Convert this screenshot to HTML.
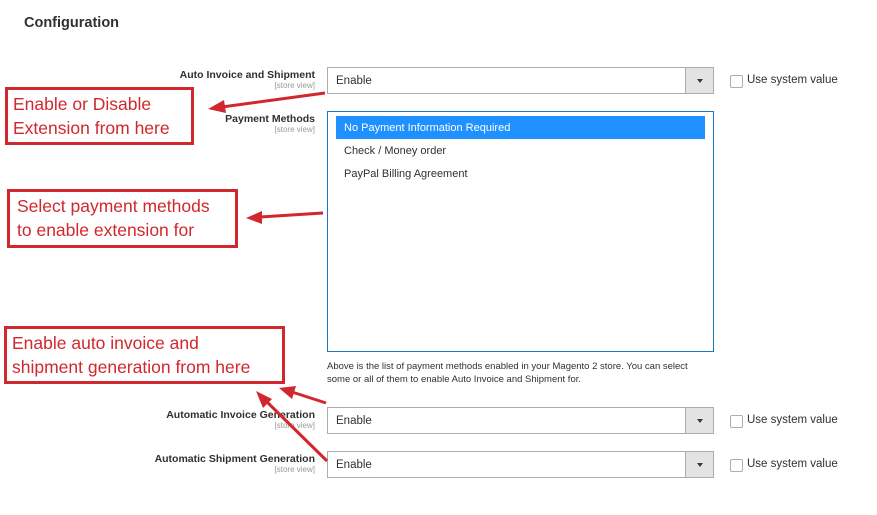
<!DOCTYPE html>
<html><head><meta charset="utf-8"><style>
*{margin:0;padding:0;box-sizing:border-box}
body{width:877px;height:515px;background:#fff;font-family:"Liberation Sans",sans-serif;position:relative;overflow:hidden;color:#303030}
.a{position:absolute}
.lbl{position:absolute;right:562px;text-align:right;font-size:10.5px;font-weight:bold;color:#303030;white-space:nowrap;line-height:13px}
.lbl small{display:block;font-size:8px;font-weight:normal;color:#999;line-height:8px}
.sel{position:absolute;left:327px;width:387px;height:27px;border:1px solid #adadad;font-size:11.5px;padding:7px 8px}
.sel .btn{position:absolute;right:0;top:0;width:28px;height:25px;background:#e3e3e3;border-left:1px solid #adadad}
.sel .btn:after{content:"";position:absolute;left:11px;top:11px;border:3.5px solid transparent;border-top:4px solid #41362f}
.cb{position:absolute;left:730px;width:13px;height:13px;border:1px solid #adadad;border-radius:2px}
.cbl{position:absolute;left:747px;font-size:11.5px;color:#303030}
.box{position:absolute;border:3px solid #d0282e;color:#d0282e;font-size:17.5px;line-height:24px;padding:2px 5px;white-space:nowrap}
.opt{position:absolute;left:336px;width:369px;height:23px;font-size:11px;padding:6px 8px 0}
</style></head><body>
<div class="a" style="left:24px;top:15px;font-size:14.5px;font-weight:bold;color:#303030">Configuration</div>

<div class="lbl" style="top:69px">Auto Invoice and Shipment<small>[store view]</small></div>
<div class="sel" style="top:67px">Enable<div class="btn"></div></div>
<div class="cb" style="top:75px"></div><div class="cbl" style="top:74px">Use system value</div>

<div class="lbl" style="top:113px">Payment Methods<small>[store view]</small></div>
<div class="a" style="left:327px;top:111px;width:387px;height:241px;border:1px solid #1979c3"></div>
<div class="opt" style="top:116px;background:#1e90ff;color:#fff">No Payment Information Required</div>
<div class="opt" style="top:139px">Check / Money order</div>
<div class="opt" style="top:162px">PayPal Billing Agreement</div>
<div class="a" style="left:327px;top:360px;width:385px;font-size:9.5px;line-height:13px">Above is the list of payment methods enabled in your Magento 2 store. You can select some or all of them to enable Auto Invoice and Shipment for.</div>

<div class="lbl" style="top:409px">Automatic Invoice Generation<small>[store view]</small></div>
<div class="sel" style="top:407px">Enable<div class="btn"></div></div>
<div class="cb" style="top:415px"></div><div class="cbl" style="top:414px">Use system value</div>

<div class="lbl" style="top:453px">Automatic Shipment Generation<small>[store view]</small></div>
<div class="sel" style="top:451px">Enable<div class="btn"></div></div>
<div class="cb" style="top:459px"></div><div class="cbl" style="top:458px">Use system value</div>

<div class="box" style="left:5px;top:87px;width:189px;height:58px">Enable or Disable<br>Extension from here</div>
<div class="box" style="left:7px;top:189px;width:231px;height:59px;padding-left:7px">Select payment methods<br>to enable extension for</div>
<div class="box" style="left:4px;top:326px;width:281px;height:58px">Enable auto invoice and<br>shipment generation from here</div>

<svg class="a" style="left:0;top:0" width="877" height="515">
<g stroke="#d0282e" stroke-width="3" fill="#d0282e">
<line x1="325" y1="93" x2="222" y2="107"/>
<polygon points="208,109 224,100 226,113" stroke="none"/>
<line x1="323" y1="213" x2="260" y2="217"/>
<polygon points="246,218 262,211 262,224" stroke="none"/>
<line x1="326" y1="403" x2="292" y2="392"/>
<polygon points="279,388 296,386 292,399" stroke="none"/>
<line x1="327" y1="461" x2="266" y2="401"/>
<polygon points="256,391 272,399 263,408" stroke="none"/>
</g></svg>
</body></html>
